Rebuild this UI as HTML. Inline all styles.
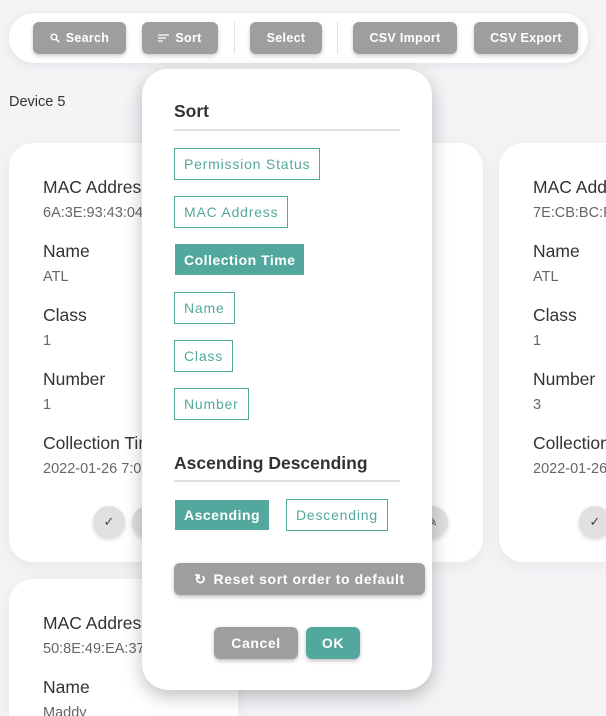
<!DOCTYPE html>
<html><head><meta charset="utf-8"><style>
*{box-sizing:border-box;margin:0;padding:0}
html,body{width:606px;height:716px;overflow:hidden}
body{background:#f4f3f6;font-family:"Liberation Sans",sans-serif;position:relative}
#wrap{position:absolute;left:0;top:0;width:606px;height:716px;overflow:hidden}
.bar{position:absolute;left:9px;top:13px;width:579px;height:50px;background:#fff;border-radius:25px;box-shadow:0 2px 10px rgba(0,0,0,.08)}
.tb{position:absolute;top:9px;height:32px;background:#9e9e9e;color:#fff;border-radius:6px;font-size:12.5px;font-weight:bold;letter-spacing:.3px;display:flex;align-items:center;justify-content:center;box-shadow:0 2px 4px rgba(0,0,0,.2)}
.sep{position:absolute;top:9px;width:1px;height:32px;background:#e2e2e2}
.card{position:absolute;background:#fff;border-radius:24px;box-shadow:0 4px 16px rgba(0,0,0,.06);overflow:hidden}
.lab{position:absolute;font-size:17.5px;color:#333;white-space:nowrap}
.val{position:absolute;font-size:14.5px;color:#666;white-space:nowrap}
.circ{position:absolute;width:32px;height:32px;border-radius:50%;background:#e0e0e0;box-shadow:0 2px 4px rgba(0,0,0,.15);color:#444;font-size:13px;display:flex;align-items:center;justify-content:center}
.pop{position:absolute;left:142px;top:69px;width:290px;height:621px;background:#fff;border-radius:26px;box-shadow:0 6px 18px rgba(0,0,0,.25)}
.h{position:absolute;left:32px;font-size:17.5px;font-weight:bold;color:#333}
.hl{position:absolute;left:32px;width:226px;height:2px;background:#e0e0e0}
.ob{position:absolute;left:32px;height:32px;border:1.5px solid #52a89c;color:#52a89c;font-size:14px;letter-spacing:.8px;display:flex;align-items:center;padding:0 9px;background:#fff}
.fb{background:#52a89c;color:#fff;font-weight:bold;border:none;letter-spacing:.5px}
.gb{position:absolute;height:32px;border-radius:6px;color:#fff;font-weight:bold;font-size:14px;letter-spacing:.6px;display:flex;align-items:center;justify-content:center;box-shadow:0 2px 4px rgba(0,0,0,.25)}
</style></head><body><div id="wrap">
<div class="bar">
<div class="tb" style="left:24px;width:93px"><svg width="10" height="10" style="margin-right:6px"><circle cx="4" cy="4" r="2.8" stroke="#fff" stroke-width="1.4" fill="none"/><path d="M6 6l3.2 3.2" stroke="#fff" stroke-width="1.6"/></svg>Search</div>
<div class="tb" style="left:133px;width:76px"><svg width="11" height="8" style="margin-right:6px"><path d="M0 1h11M0 4h8M0 7h5" stroke="#fff" stroke-width="1.3"/></svg>Sort</div>
<div class="sep" style="left:225px"></div>
<div class="tb" style="left:241px;width:72px">Select</div>
<div class="sep" style="left:328px"></div>
<div class="tb" style="left:344px;width:104px">CSV Import</div>
<div class="tb" style="left:465px;width:104px">CSV Export</div>
</div>
<div style="position:absolute;left:9px;top:94px;font-size:14.5px;color:#333">Device 5</div>

<div class="card" style="left:9px;top:143px;width:474px;height:419px">
<div class="lab" style="left:34px;top:34px">MAC Address</div><div class="val" style="left:34px;top:62px">6A:3E:93:43:04:1B</div>
<div class="lab" style="left:34px;top:98px">Name</div><div class="val" style="left:34px;top:126px">ATL</div>
<div class="lab" style="left:34px;top:162px">Class</div><div class="val" style="left:34px;top:190px">1</div>
<div class="lab" style="left:34px;top:226px">Number</div><div class="val" style="left:34px;top:254px">1</div>
<div class="lab" style="left:34px;top:290px">Collection Time</div><div class="val" style="left:34px;top:318px">2022-01-26 7:00:00</div>
<div class="circ" style="left:84px;top:363px">✓</div><div class="circ" style="left:123px;top:363px"></div>
<div class="circ" style="left:407px;top:363px">✎</div>
</div>
<div class="card" style="left:499px;top:143px;width:107px;height:419px;border-radius:24px 0 0 24px">
<div class="lab" style="left:34px;top:34px">MAC Address</div><div class="val" style="left:34px;top:62px">7E:CB:BC:F1</div>
<div class="lab" style="left:34px;top:98px">Name</div><div class="val" style="left:34px;top:126px">ATL</div>
<div class="lab" style="left:34px;top:162px">Class</div><div class="val" style="left:34px;top:190px">1</div>
<div class="lab" style="left:34px;top:226px">Number</div><div class="val" style="left:34px;top:254px">3</div>
<div class="lab" style="left:34px;top:290px">Collection Time</div><div class="val" style="left:34px;top:318px">2022-01-26</div>
<div class="circ" style="left:80px;top:363px">✓</div>
</div>
<div class="card" style="left:9px;top:579px;width:229px;height:137px;border-radius:24px 24px 0 0">
<div class="lab" style="left:34px;top:34px">MAC Address</div><div class="val" style="left:34px;top:62px">50:8E:49:EA:37:11</div>
<div class="lab" style="left:34px;top:98px">Name</div><div class="val" style="left:34px;top:126px">Maddy</div>
</div>

<div class="pop">
<div class="h" style="top:32px">Sort</div><div class="hl" style="top:60px"></div>
<div class="ob" style="top:79px">Permission Status</div>
<div class="ob" style="top:127px">MAC Address</div>
<div class="ob fb" style="top:175px;height:31px;left:33px">Collection Time</div>
<div class="ob" style="top:223px">Name</div>
<div class="ob" style="top:271px">Class</div>
<div class="ob" style="top:319px">Number</div>
<div class="h" style="top:384px">Ascending Descending</div><div class="hl" style="top:411px"></div>
<div class="ob fb" style="top:431px;height:30px;left:33px">Ascending</div>
<div class="ob" style="top:430px;left:144px">Descending</div>
<div class="gb" style="left:32px;top:494px;width:251px;background:#9e9e9e"><span style="margin-right:7px;font-size:14px">↻</span>Reset sort order to default</div>
<div class="gb" style="left:72px;top:558px;width:84px;background:#9e9e9e">Cancel</div>
<div class="gb" style="left:164px;top:558px;width:54px;background:#52a89c">OK</div>
</div>
</div></body></html>
